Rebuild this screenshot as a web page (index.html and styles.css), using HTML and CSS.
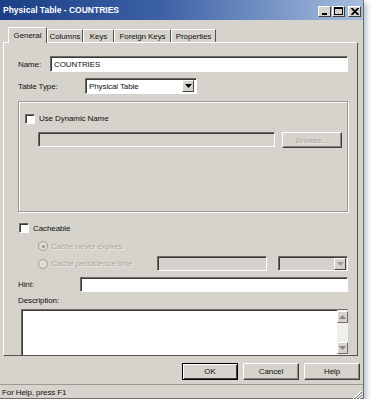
FILE: index.html
```html
<!DOCTYPE html>
<html>
<head>
<meta charset="utf-8">
<link rel="stylesheet" href="styles.css">
</head>
<body>
<div class="dialog">
  <div class="titlebar">
    <span class="title">Physical Table - COUNTRIES</span>
    <div class="tbtns">
      <span class="tbtn"><svg width="8" height="7" viewBox="0 0 8 7"><rect x="1" y="5" width="5" height="2" fill="#000"/></svg></span>
      <span class="tbtn"><svg width="9" height="8" viewBox="0 0 9 8"><rect x="0.5" y="0.5" width="8" height="7" fill="none" stroke="#000"/><rect x="0" y="0" width="9" height="2" fill="#000"/></svg></span>
      <span class="tbtn close"><svg width="8" height="7" viewBox="0 0 8 7"><path d="M0.5 0 L7.5 7 M7.5 0 L0.5 7" stroke="#000" stroke-width="1.8"/></svg></span>
    </div>
  </div>
  <div class="tabs">
    <span class="tab active t-gen">General</span>
    <span class="tab t-col">Columns</span>
    <span class="tab t-keys">Keys</span>
    <span class="tab t-fk">Foreign Keys</span>
    <span class="tab t-prop">Properties</span>
  </div>
  <div class="panel">
    <div class="row">
      <span class="lbl lbl-name">Name:</span>
      <div class="field white grow">COUNTRIES</div>
    </div>
    <div class="row row-type">
      <span class="lbl lbl-type">Table Type:</span>
      <div class="field white select">Physical Table<span class="drop"><svg width="7" height="4" viewBox="0 0 7 4"><path d="M0 0 H7 L3.5 4 Z" fill="#000"/></svg></span></div>
    </div>
    <div class="group">
      <div class="check-row">
        <span class="checkbox"></span><span>Use Dynamic Name</span>
      </div>
      <div class="dyn-row">
        <div class="field disabled grow"></div>
        <span class="btn btn-browse">Browse...</span>
      </div>
    </div>
    <div class="check-row cache">
      <span class="checkbox"></span><span>Cacheable</span>
    </div>
    <div class="radio-row">
      <span class="radio checked"></span><span class="dim">Cache never expires</span>
    </div>
    <div class="radio-row r2">
      <span class="radio"></span><span class="dim r2-text">Cache persistence time</span>
      <div class="field disabled persist"></div>
      <div class="field disabled unit"><span class="drop dis"><svg width="7" height="4" viewBox="0 0 7 4"><path d="M0 0 H7 L3.5 4 Z" fill="#a09c94"/></svg></span></div>
    </div>
    <div class="row row-hint">
      <span class="lbl lbl-hint">Hint:</span>
      <div class="field white grow"></div>
    </div>
    <div class="desc-lbl">Description:</div>
    <div class="textarea">
      <div class="vscroll">
        <span class="sbtn"><svg width="7" height="4" viewBox="0 0 7 4"><path d="M0 4 H7 L3.5 0 Z" fill="#8a8680"/></svg></span>
        <span class="sbtn"><svg width="7" height="4" viewBox="0 0 7 4"><path d="M0 0 H7 L3.5 4 Z" fill="#8a8680"/></svg></span>
      </div>
    </div>
  </div>
  <div class="buttons">
    <span class="btn default">OK</span>
    <span class="btn">Cancel</span>
    <span class="btn">Help</span>
  </div>
  <div class="status">
    <span>For Help, press F1</span>
    <span class="grip"><svg width="10" height="10" viewBox="0 0 10 10"><path d="M9 1 L1 9 M9 4 L4 9 M9 7 L7 9" stroke="#fff" stroke-width="1"/><path d="M10 2 L2 10 M10 5 L5 10 M10 8 L8 10" stroke="#8a8680" stroke-width="1"/></svg></span>
  </div>
</div>
</body>
</html>
```

FILE: styles.css
```css
html, body {
  margin: 0;
  padding: 0;
  background: #ffffff;
}
body {
  font-family: "Liberation Sans", "DejaVu Sans", sans-serif;
  font-size: 8px;
  letter-spacing: -0.1px;
  color: #111;
}
.dialog {
  width: 364px;
  height: 399px;
  background: #d6d3cc;
  border-right: 1px solid #6f6c66;
  border-bottom: 1px solid #6f6c66;
  box-shadow: 3px 3px 5px rgba(60, 80, 120, 0.35);
  display: flex;
  flex-direction: column;
  box-sizing: border-box;
}
.titlebar {
  height: 20px;
  background: linear-gradient(to right, #1b3f86 0%, #3d62a6 45%, #a8bedf 100%);
  display: flex;
  align-items: center;
  justify-content: space-between;
  padding: 0 2px 0 3px;
  flex: none;
}
.title {
  color: #fff;
  font-weight: bold;
  font-size: 8.5px;
  letter-spacing: 0;
}
.tbtns {
  display: flex;
  gap: 1px;
  padding-top: 2px;
}
.tbtn {
  width: 11px;
  height: 9px;
  background: #d6d3cc;
  border-top: 1px solid #fff;
  border-left: 1px solid #fff;
  border-right: 1px solid #404040;
  border-bottom: 1px solid #404040;
  display: flex;
  align-items: center;
  justify-content: center;
}
.tbtn.close { margin-left: 2px; }
.tabs {
  display: flex;
  margin: 6px 0 0 8px;
  height: 16px;
  align-items: flex-end;
  flex: none;
}
.tab {
  height: 13px;
  display: flex;
  align-items: center;
  justify-content: center;
  border-right: 1px solid #55524e;
  border-top: 1px solid #fff;
  border-left: 1px solid #fff;
  box-sizing: border-box;
}
.t-gen { width: 39px; }
.t-col { width: 36px; }
.t-keys { width: 31px; }
.t-fk { width: 57px; }
.t-prop { width: 45px; }
.tab.active {
  height: 16px;
  margin-bottom: -1px;
  background: #d6d3cc;
  position: relative;
  z-index: 1;
}
.panel {
  margin: 0 5px 0 3px;
  height: 314px;
  border-top: 1px solid #fff;
  border-left: 1px solid #fff;
  border-right: 1px solid #55524e;
  border-bottom: 1px solid #55524e;
  box-sizing: border-box;
  padding: 13px 9px 0 14px;
  display: flex;
  flex-direction: column;
  flex: none;
}
.row {
  display: flex;
  align-items: center;
  height: 16px;
}
.lbl { flex: none; }
.lbl-name { width: 32px; }
.lbl-type { width: 67px; }
.lbl-hint { width: 62px; }
.row-type { margin-top: 6px; }
.field {
  height: 16px;
  box-sizing: border-box;
  border-top: 1px solid #6e6b66;
  border-left: 1px solid #6e6b66;
  border-right: 1px solid #fff;
  border-bottom: 1px solid #fff;
  box-shadow: inset 1px 1px 0 #3c3a37;
  display: flex;
  align-items: center;
  padding-left: 3px;
}
.field.white { background: #fff; }
.field.disabled { background: #d6d3cc; }
.grow { flex: 1; }
.select {
  width: 112px;
  justify-content: space-between;
  padding-right: 2px;
}
.drop {
  width: 10px;
  height: 10px;
  background: #d6d3cc;
  border-top: 1px solid #fff;
  border-left: 1px solid #fff;
  border-right: 1px solid #404040;
  border-bottom: 1px solid #404040;
  display: flex;
  align-items: center;
  justify-content: center;
}
.drop.dis { margin-left: auto; margin-right: 1px; }
.group {
  margin-top: 7px;
  height: 114px;
  border: 1px solid #9c9892;
  box-shadow: 1px 1px 0 #fff, inset 1px 1px 0 #fff;
  box-sizing: border-box;
  padding: 11px 5px 0 6px;
  display: flex;
  flex-direction: column;
}
.check-row {
  display: flex;
  align-items: center;
  gap: 4px;
  height: 11px;
}
.checkbox {
  width: 10px;
  height: 10px;
  background: #fff;
  box-sizing: border-box;
  border-top: 1px solid #6e6b66;
  border-left: 1px solid #6e6b66;
  border-right: 1px solid #fff;
  border-bottom: 1px solid #fff;
  box-shadow: inset 1px 1px 0 #3c3a37;
  flex: none;
}
.dyn-row {
  display: flex;
  margin: 8px 0 0 13px;
  gap: 7px;
  height: 15px;
}
.dyn-row .field { height: 15px; }
.btn {
  width: 56px;
  height: 16px;
  box-sizing: border-box;
  display: flex;
  align-items: center;
  justify-content: center;
  background: #d6d3cc;
  border-top: 1px solid #fff;
  border-left: 1px solid #fff;
  border-right: 1px solid #404040;
  border-bottom: 1px solid #404040;
  box-shadow: inset -1px -1px 0 #8a8680;
}
.btn-browse {
  width: 60px;
  height: 16px;
  color: #aaa69e;
  text-shadow: 1px 1px 0 #eeece8;
}
.cache {
  margin-top: 11px;
  margin-left: 1px;
}
.radio-row {
  display: flex;
  align-items: center;
  height: 11px;
  margin: 7px 0 0 20px;
  gap: 3px;
}
.radio-row.r2 {
  margin-top: 5px;
  height: 15px;
}
.radio {
  width: 8px;
  height: 8px;
  border-radius: 50%;
  border: 1px solid #a09c94;
  background: #e0ddd6;
  position: relative;
  flex: none;
}
.radio.checked::after {
  content: "";
  position: absolute;
  left: 2.5px;
  top: 2.5px;
  width: 3px;
  height: 3px;
  border-radius: 50%;
  background: #9a968e;
}
.dim {
  color: #aaa69e;
  text-shadow: 1px 1px 0 #eeece8;
}
.r2-text { width: 105px; }
.persist {
  width: 111px;
  height: 15px;
}
.unit {
  width: 71px;
  height: 15px;
  margin-left: 8px;
}
.row-hint { margin-top: 6px; height: 15px; }
.row-hint .field { height: 15px; }
.desc-lbl {
  margin-top: 4px;
  height: 10px;
  line-height: 10px;
}
.textarea {
  margin: 3px 0 0 3px;
  height: 47px;
  background: #fff;
  box-sizing: border-box;
  border-top: 1px solid #6e6b66;
  border-left: 1px solid #6e6b66;
  box-shadow: inset 1px 1px 0 #3c3a37;
  display: flex;
  justify-content: flex-end;
}
.vscroll {
  width: 11px;
  background: #f1efeb;
  display: flex;
  flex-direction: column;
  justify-content: space-between;
  padding: 1px 0;
}
.sbtn {
  width: 9px;
  height: 10px;
  background: #d6d3cc;
  border-top: 1px solid #fff;
  border-left: 1px solid #fff;
  border-right: 1px solid #6e6b66;
  border-bottom: 1px solid #6e6b66;
  display: flex;
  align-items: center;
  justify-content: center;
}
.buttons {
  display: flex;
  justify-content: flex-end;
  gap: 5px;
  margin: 7px 3px 0 0;
  height: 17px;
  flex: none;
}
.buttons .btn { height: 17px; width: 56px; }
.btn.default {
  border: 1px solid #000;
  box-shadow: inset 1px 1px 0 #fff, inset -1px -1px 0 #404040;
}
.status {
  margin-top: 4px;
  height: 15px;
  border-top: 1px solid #9c9892;
  display: flex;
  align-items: center;
  justify-content: space-between;
  padding: 0 1px 0 2px;
  flex: none;
}
.grip {
  display: flex;
  align-self: flex-end;
}
```
